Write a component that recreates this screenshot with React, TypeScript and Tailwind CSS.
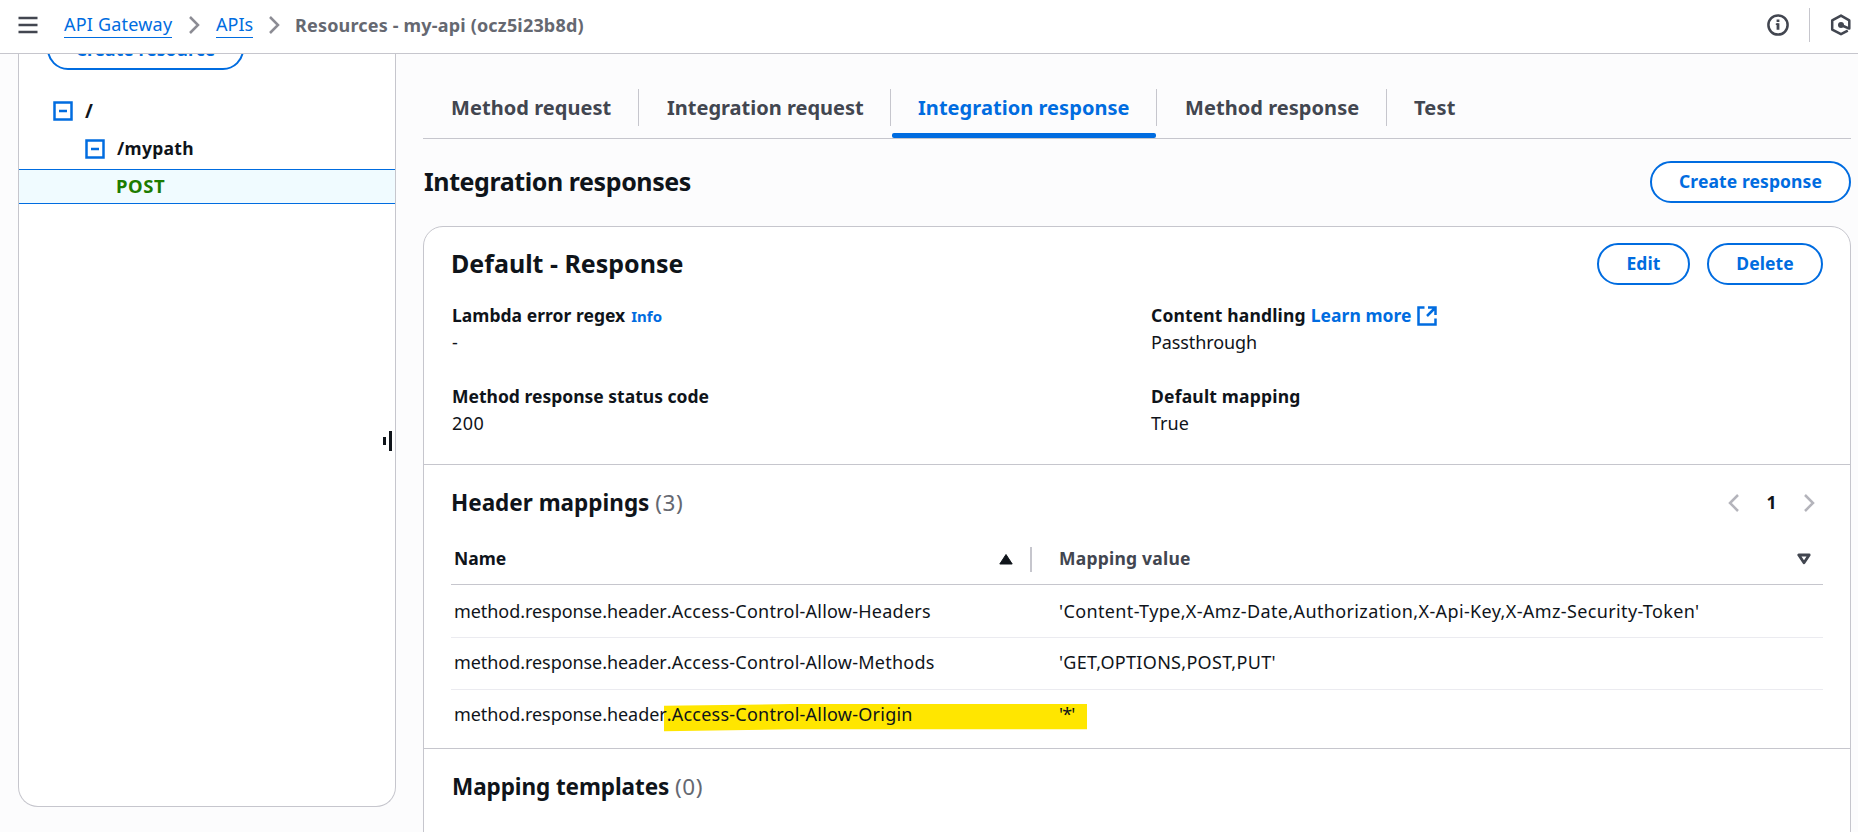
import type { ReactNode } from 'react';

const tabs = [
  { label: 'Method request', width: 'w-[216px]', pad: 'pl-[28px]', tracking: 'tracking-[0.05px]' },
  { label: 'Integration request', width: 'w-[252px]', pad: 'pl-[28px]', tracking: 'tracking-[0px]' },
  { label: 'Integration response', width: 'w-[266px]', pad: 'pl-[27px]', tracking: 'tracking-[0.05px]', active: true },
  { label: 'Method response', width: 'w-[230px]', pad: 'pl-[28px]', tracking: 'tracking-[0.05px]' },
  { label: 'Test', width: 'w-[120px]', pad: 'pl-[27px]', tracking: 'tracking-[0.2px]', last: true },
];

function PillButton({ children, className }: { children: ReactNode; className: string }) {
  return (
    <button
      className={`flex h-[42px] shrink-0 items-center justify-center rounded-[21px] border-2 border-[#006ce0] bg-white pt-px text-[17.5px] leading-none font-bold tracking-[0.1px] text-[#006ce0] ${className}`}
    >
      {children}
    </button>
  );
}

function Chevron({ className, flip }: { className: string; flip?: boolean }) {
  return (
    <svg viewBox="0 0 11 18" className={`h-[18px] w-[11px] shrink-0 ${className}`} fill="none" stroke="currentColor" strokeWidth="2.5">
      <path d={flip ? 'M10 1 2 9l8 8' : 'M1 1l8 8-8 8'} />
    </svg>
  );
}

function MinusBox() {
  return (
    <svg viewBox="0 0 20 20" className="h-5 w-5 shrink-0" fill="none" stroke="#006ce0" strokeWidth="2.5">
      <path d="M1.5 1.5h17v17h-17zM6 10h8" />
    </svg>
  );
}

function ExternalIcon() {
  return (
    <svg viewBox="0 0 20 20" className="h-5 w-5 shrink-0" fill="none" stroke="#006ce0" strokeWidth="2.5">
      <path d="M7.5 1.5H1.5v17h17v-6" />
      <path d="M11 1.5h7.5V9M18.5 1.5 10 10" />
    </svg>
  );
}

function TopBar() {
  return (
    <header className="flex h-[54px] shrink-0 items-center border-b border-[#c6c6cd] bg-white pb-[3px] pl-[18px] text-[18px] leading-none">
      <svg viewBox="0 0 20 18" className="h-[18px] w-5" stroke="#424650" strokeWidth="2.5">
        <path d="M0.5 2h19M0.5 9h19M0.5 16h19" />
      </svg>
      <a className="mt-px ml-[26px] w-[108px] border-b border-[#006ce0] pb-[2px] leading-[22px] tracking-[0.2px] whitespace-nowrap text-[#006ce0]">API Gateway</a>
      <Chevron className="ml-[17px] text-[#8c8c94]" />
      <a className="mt-px ml-[16px] w-[37px] border-b border-[#006ce0] pb-[2px] leading-[22px] text-[#006ce0]">APIs</a>
      <Chevron className="ml-[16px] text-[#8c8c94]" />
      <span className="ml-[15px] pb-px font-bold tracking-[0.18px] text-[#656871]">Resources - my-api (ocz5i23b8d)</span>
      <div className="ml-auto flex items-center pr-[6px]">
        <svg viewBox="0 0 22 22" className="h-[22px] w-[22px]" fill="none" stroke="#424650" strokeWidth="2.5">
          <circle cx="11" cy="11" r="9.6" />
          <path d="M11 5.5v2.6M11 9.2v6.6" strokeWidth="2.8" />
          <path d="M8.8 10.2h2.4" strokeWidth="1.6" />
        </svg>
        <div className="mx-5 h-[34px] w-px bg-[#c6c6cd]" />
        <svg viewBox="0 0 22 22" className="h-[22px] w-[22px]" fill="none" stroke="#424650" strokeWidth="2.5">
          <path d="M17.8 16.6 11 20.2 2.2 15.6V6.4L11 1.6l8.3 4.8v8.2L11 11" strokeLinejoin="round" />
          <circle cx="11" cy="11" r="3" fill="#424650" stroke="none" />
        </svg>
      </div>
    </header>
  );
}

function Sidebar() {
  return (
    <aside className="relative ml-[18px] h-[753px] w-[378px] shrink-0 overflow-hidden rounded-b-[20px] border-x border-b border-[#c6c6cd] bg-white text-[17.5px] leading-none font-bold text-[#0f141a]">
      <PillButton className="-mt-[26px] ml-[28px] w-[197px]">Create resource</PillButton>
      <div className="mt-[22px] flex h-[38px] items-center pl-[34px]">
        <MinusBox />
        <span className="ml-3 text-[19px]">/</span>
      </div>
      <div className="flex h-[38px] items-center pl-[66px]">
        <MinusBox />
        <span className="ml-3 tracking-[0.3px]">/mypath</span>
      </div>
      <div className="mt-px flex h-[35px] items-center border-y border-[#006ce0] bg-[#f0fbff] pl-[97px] text-[18.5px] tracking-[0.6px] text-[#1d7c00]">POST</div>
      <div className="absolute top-[377px] right-[3px] flex items-center gap-[3px]">
        <div className="h-2 w-[3px] bg-[#0f141a]" />
        <div className="h-5 w-[3px] bg-[#0f141a]" />
      </div>
    </aside>
  );
}

function Field({ label, value, extra }: { label: ReactNode; value: ReactNode; extra?: ReactNode }) {
  return (
    <div className="h-[81px] text-[17.5px]">
      <div className="flex h-[27px] items-center leading-none font-bold whitespace-nowrap">
        {label}
        {extra}
      </div>
      <div className="flex h-[27px] items-center pb-[2px] text-[18px] leading-none">{value}</div>
    </div>
  );
}

function Row({ attribute, value, className, valueTracking }: { attribute: string; value: string; className: string; valueTracking: string }) {
  return (
    <div className={`relative flex items-center ${className}`}>
      <div className="relative w-[608px] shrink-0 pl-[3px]">
        <span className="tracking-[-0.06px]">method.response.header</span>
        <span className="tracking-[0.24px]">{attribute}</span>
      </div>
      <div className={`relative whitespace-nowrap ${valueTracking}`}>{value}</div>
    </div>
  );
}

export default function App() {
  return (
    <div className="flex h-[832px] w-[1858px] flex-col overflow-hidden bg-[#fcfcfd] font-['Noto_Sans',sans-serif] text-[#0f141a]">
      <TopBar />
      <div className="flex min-h-0 flex-1">
        <Sidebar />
        <main className="ml-[27px] w-[1428px] shrink-0">
          <nav className="flex h-[85px] items-start border-b border-[#c6c6cd] pt-[35px]">
            {tabs.map((t) => (
              <div key={t.label} className={`flex h-[49px] shrink-0 flex-col justify-between ${t.width}`}>
                <div
                  className={`flex h-[37px] items-center pt-px text-[20px] leading-none font-bold whitespace-nowrap ${t.pad} ${t.tracking} ${t.active ? 'text-[#006ce0]' : 'text-[#424650]'} ${t.last ? '' : 'border-r border-[#c6c6cd]'}`}
                >
                  {t.label}
                </div>
                {t.active && <div className="mr-px ml-px h-[5px] rounded-[2px] bg-[#006ce0]" />}
              </div>
            ))}
          </nav>

          <div className="flex h-[87px] items-center justify-between pb-[2px]">
            <h1 className="pl-px text-[25px] leading-none font-bold tracking-[-0.42px]">Integration responses</h1>
            <PillButton className="w-[201px]">Create response</PillButton>
          </div>

          <section className="h-[640px] rounded-t-[20px] border border-[#c6c6cd] bg-white">
            <div className="flex h-[75px] items-center pr-[27px] pb-[2px] pl-[27px]">
              <h2 className="mr-auto text-[25px] leading-none font-bold">Default - Response</h2>
              <PillButton className="w-[93px]">Edit</PillButton>
              <PillButton className="ml-[17px] w-[116px]">Delete</PillButton>
            </div>
            <div className="grid h-[163px] grid-cols-[699px_1fr] content-start border-b border-[#c6c6cd] pl-[28px]">
              <Field
                label={<span className="tracking-[0.03px]">Lambda error regex</span>}
                extra={<a className="mt-px ml-[6px] text-[15px] text-[#006ce0]">Info</a>}
                value="-"
              />
              <Field
                label={<span className="tracking-[0.15px]">Content handling</span>}
                extra={
                  <a className="ml-[5px] flex items-center gap-[5px] text-[#006ce0]">
                    <span className="tracking-[0.05px]">Learn more</span>
                    <ExternalIcon />
                  </a>
                }
                value={<span className="tracking-[-0.1px]">Passthrough</span>}
              />
              <Field label={<span>Method response status code</span>} value={<span className="tracking-[0.5px]">200</span>} />
              <Field label={<span className="tracking-[0.2px]">Default mapping</span>} value="True" />
            </div>

            <div className="flex h-[284px] flex-col border-b border-[#c6c6cd] pr-[27px] pl-[27px]">
              <div className="flex h-[75px] shrink-0 items-center">
                <h3 className="mr-auto pt-[2px] text-[22.5px] leading-none font-bold">
                  Header mappings <span className="font-normal tracking-[0.6px] text-[#656871]">(3)</span>
                </h3>
                <div className="flex items-center pr-[8px]">
                  <Chevron flip className="text-[#b4b4bb]" />
                  <span className="w-[65px] text-center text-[17.5px] leading-none font-bold">1</span>
                  <Chevron className="text-[#b4b4bb]" />
                </div>
              </div>
              <div className="flex h-[45px] shrink-0 items-start border-b border-[#c6c6cd] text-[17.5px] leading-none font-bold">
                <div className="flex h-[37px] w-[579px] items-center justify-between pr-[17px] pl-[3px]">
                  <span>Name</span>
                  <svg viewBox="0 0 14 12" className="h-3 w-[14px]" fill="#0f141a" stroke="#0f141a" strokeLinejoin="round">
                    <path d="M7 1.5 13.2 11H.8z" />
                  </svg>
                </div>
                <div className="mt-[7px] h-[25px] w-[2px] bg-[#c6c6cd]" />
                <div className="flex h-[37px] flex-1 items-center justify-between pr-[12px] pl-[27px] text-[#424650]">
                  <span className="tracking-[0.22px]">Mapping value</span>
                  <svg viewBox="0 0 14 12" className="h-3 w-[14px]" fill="none" stroke="#424650" strokeWidth="2.8" strokeLinejoin="round">
                    <path d="M1.8 2h10.4L7 9.8z" />
                  </svg>
                </div>
              </div>
              <div className="text-[18px] leading-none">
                <Row
                  className="h-[53px] border-b border-[#ebebf0] pb-px"
                  attribute=".Access-Control-Allow-Headers"
                  value="'Content-Type,X-Amz-Date,Authorization,X-Api-Key,X-Amz-Security-Token'"
                  valueTracking="tracking-[0.37px]"
                />
                <Row className="h-[52px] border-b border-[#ebebf0] pb-[3px]" attribute=".Access-Control-Allow-Methods" value="'GET,OPTIONS,POST,PUT'" valueTracking="tracking-[0.3px]" />
                <div className="relative">
                  <svg viewBox="0 0 423 28" className="absolute top-[14px] left-[213px] h-7 w-[423px]" fill="#ffe600">
                    <path d="M0 1.8 127 0H423V25.3H127L0 27.2z" />
                  </svg>
                  <Row className="h-[49px] pb-[2px]" attribute=".Access-Control-Allow-Origin" value="'*'" valueTracking="tracking-[-0.8px]" />
                </div>
              </div>
            </div>

            <div className="flex h-[75px] items-center pt-[2px] pl-[28px]">
              <h3 className="text-[22.5px] leading-none font-bold tracking-[-0.08px]">
                Mapping templates <span className="font-normal tracking-[0.6px] text-[#656871]">(0)</span>
              </h3>
            </div>
          </section>
        </main>
      </div>
    </div>
  );
}
